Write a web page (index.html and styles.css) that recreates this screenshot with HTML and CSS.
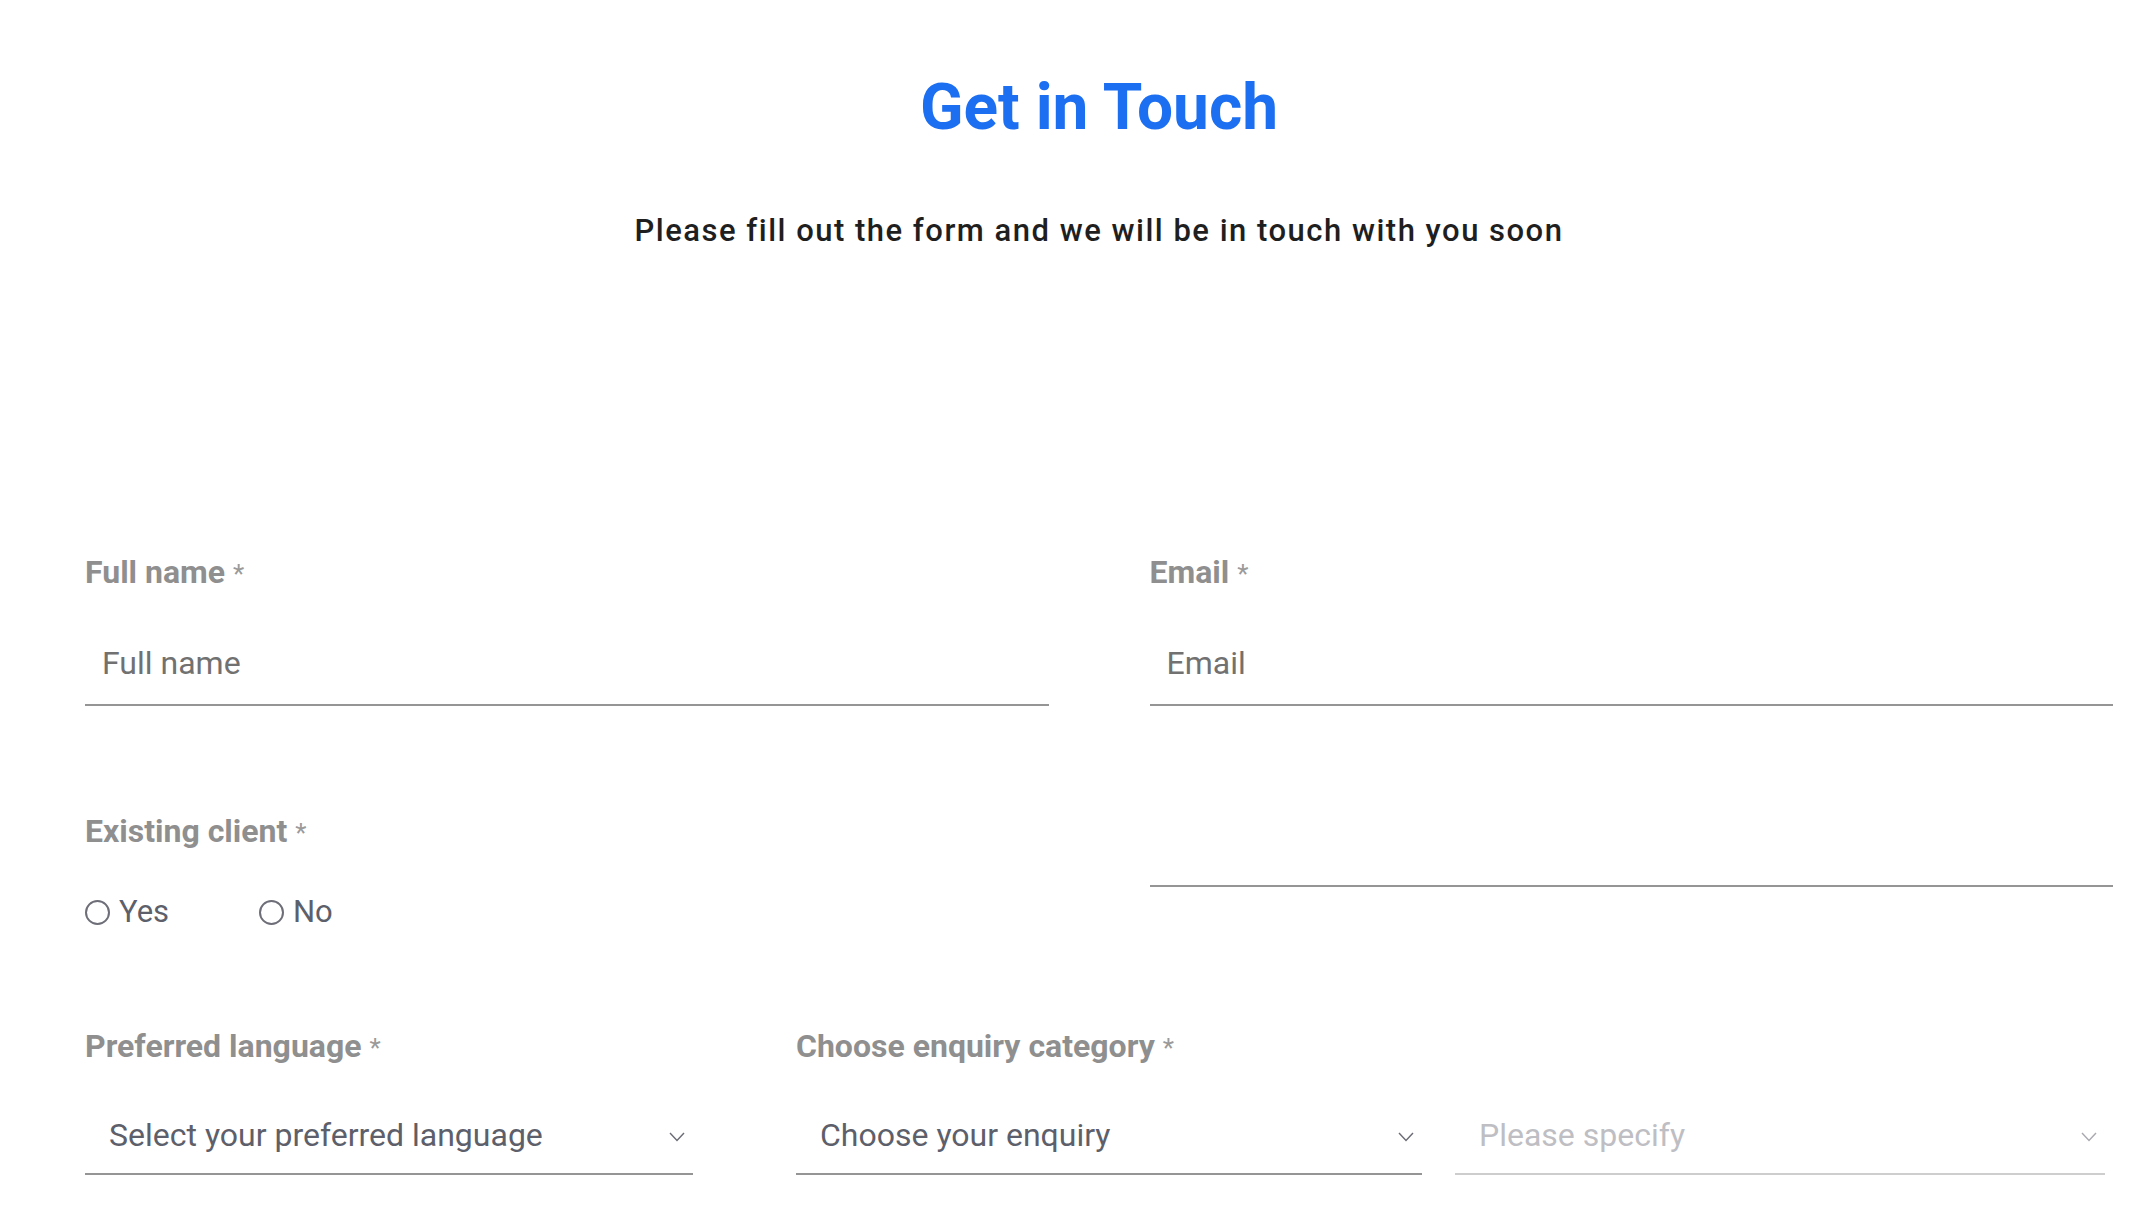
FILE: index.html
```html
<!DOCTYPE html>
<html lang="en">
<head>
  <meta charset="UTF-8">
  <meta name="viewport" content="width=device-width, initial-scale=1.0">
  <title>Get in Touch</title>
  <link rel="stylesheet" href="styles.css">
</head>
<body>
  <div class="page">
    <h1 class="title">Get in Touch</h1>
    <p class="subtitle">Please fill out the form and we will be in touch with you soon</p>

    <form class="contact-form" id="contactForm">
      <div class="row two-col first-row">
        <div class="field">
          <label class="field-label" for="fullName">Full name <span class="req">*</span></label>
          <input class="text-input" type="text" id="fullName" placeholder="Full name">
        </div>
        <div class="field">
          <label class="field-label" for="email">Email <span class="req">*</span></label>
          <input class="text-input" type="email" id="email" placeholder="Email">
        </div>
      </div>

      <div class="row two-col client-row">
        <div class="field">
          <span class="field-label">Existing client <span class="req">*</span></span>
          <div class="radio-group">
            <label class="radio"><input type="radio" name="client" value="yes"> Yes</label>
            <label class="radio"><input type="radio" name="client" value="no"> No</label>
          </div>
        </div>
        <div class="field">
          <input class="text-input extra-input" type="text" id="clientRef">
        </div>
      </div>

      <div class="row bottom-row">
        <div class="field">
          <label class="field-label" for="language">Preferred language <span class="req">*</span></label>
          <div class="select-wrap">
            <select class="select" id="language">
              <option value="">Select your preferred language</option>
              <option value="en">English</option>
              <option value="fr">French</option>
            </select>
            <svg class="chevron" width="16" height="10" viewBox="0 0 16 10"><polyline points="1,1 8,8.5 15,1" fill="none" stroke="currentColor" stroke-width="1.4"/></svg>
          </div>
        </div>
        <div class="field">
          <label class="field-label" for="enquiry">Choose enquiry category <span class="req">*</span></label>
          <div class="select-pair">
            <div class="select-wrap enquiry">
              <select class="select" id="enquiry">
                <option value="">Choose your enquiry</option>
                <option value="general">General</option>
                <option value="support">Support</option>
              </select>
              <svg class="chevron" width="16" height="10" viewBox="0 0 16 10"><polyline points="1,1 8,8.5 15,1" fill="none" stroke="currentColor" stroke-width="1.4"/></svg>
            </div>
            <div class="select-wrap specify is-disabled">
              <select class="select" id="specify" disabled>
                <option value="">Please specify</option>
              </select>
              <svg class="chevron" width="16" height="10" viewBox="0 0 16 10"><polyline points="1,1 8,8.5 15,1" fill="none" stroke="currentColor" stroke-width="1.4"/></svg>
            </div>
          </div>
        </div>
      </div>
    </form>
  </div>
</body>
</html>
```

FILE: styles.css
```css
body {
  margin: 0;
  font-family: Roboto, "Liberation Sans", Arial, sans-serif;
  background: #fff;
}
.page {
  padding: 70px 33px 0 85px;
}
.title {
  margin: 0;
  font-size: 64px;
  font-weight: 700;
  line-height: normal;
  color: #1d6ff1;
  text-align: center;
}
.subtitle {
  margin: 67px 0 0;
  font-size: 31px;
  font-weight: 500;
  line-height: normal;
  letter-spacing: 1.5px;
  color: #1f1f1f;
  text-align: center;
}
.contact-form { padding-top: 304px; }
.row { display: grid; }
.two-col {
  grid-template-columns: 1fr 1fr;
  column-gap: 101px;
}
.first-row { margin-bottom: 106px; }
.client-row { margin-bottom: 97px; }
.bottom-row {
  grid-template-columns: 608px 1fr;
  column-gap: 103px;
}
.field-label {
  display: block;
  margin-bottom: 44px;
  font-size: 32px;
  font-weight: 700;
  line-height: normal;
  color: #8f8f8f;
}
.req {
  font-weight: 400;
  font-size: 26px;
  color: #9a9a9a;
}
.text-input {
  display: block;
  width: 100%;
  box-sizing: border-box;
  height: 71px;
  padding: 10px 17px 23px;
  border: none;
  border-bottom: 2px solid #959595;
  background: transparent;
  font-family: inherit;
  font-size: 32px;
  color: #444;
  outline: none;
}
.text-input::placeholder { color: #717171; }
.extra-input { margin-top: 4px; }

.radio-group {
  display: flex;
  margin-top: 43px;
  height: 36px;
}
.radio {
  display: flex;
  align-items: center;
  gap: 9px;
  width: 174px;
  font-size: 31px;
  line-height: 36px;
  color: #5d5f6b;
  cursor: pointer;
}
.radio input {
  appearance: none;
  margin: 0;
  width: 25px;
  height: 25px;
  border: 2px solid #6d6e77;
  border-radius: 50%;
  box-sizing: border-box;
  background: #fff;
}
.radio input:checked { background: radial-gradient(#1d6ff1 45%, #fff 50%); }

.select-pair {
  display: flex;
  gap: 33px;
}
.select-wrap {
  position: relative;
  color: #6a6b74;
}
.enquiry { width: 626px; }
.specify { width: 650px; }
.select {
  display: block;
  width: 100%;
  box-sizing: border-box;
  height: 66px;
  padding: 8px 50px 20px 24px;
  border: none;
  border-bottom: 2px solid #959595;
  border-radius: 0;
  background: transparent;
  appearance: none;
  font-family: inherit;
  font-size: 32px;
  line-height: 36px;
  color: #5d5f6b;
  outline: none;
}
.chevron {
  position: absolute;
  right: 8px;
  top: 23px;
}
.is-disabled { color: #a9a9b0; }
.is-disabled .select {
  color: #a3a3ab;
  border-bottom-color: #b9b9b9;
}
```
